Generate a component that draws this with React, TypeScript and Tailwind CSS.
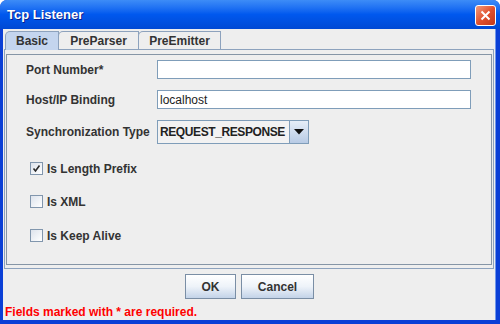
import { useState } from 'react';

const font = { fontFamily: '"Liberation Sans", Arial, sans-serif' };

function Tab({ label, active, width }: { label: string; active?: boolean; width: string }) {
  return (
    <div
      className={`flex h-[18px] items-center justify-center rounded-tl-[5px] border border-b-0 border-[#8da2bd] text-[12px] font-bold text-[#333333] ${width} ${
        active ? 'relative z-10 -mb-[1px] h-[19px] bg-[#c4d5ee]' : '-ml-[1px] bg-[#eeeeee]'
      }`}
    >
      {label}
    </div>
  );
}

function Field({ value }: { value?: string }) {
  return (
    <div className="flex h-[19px] w-[314px] items-center border border-[#7f9db9] bg-white pl-[2px] text-[12px] text-[#222222]">
      {value}
    </div>
  );
}

function Check({ label, checked }: { label: string; checked?: boolean }) {
  return (
    <div className="flex h-[13px] items-center pl-[4px]">
      <div className="flex h-[13px] w-[13px] items-center justify-center border border-[#8196ad] bg-gradient-to-br from-[#dde3ec] to-white">
        {checked && (
          <svg width="9" height="9" viewBox="0 0 9 9" aria-hidden>
            <path d="M1.5 4.5 L3.5 7 L7.5 1.5" fill="none" stroke="#2a2a2a" strokeWidth="1.6" />
          </svg>
        )}
      </div>
      <span className="ml-[4px] text-[12px] font-bold text-[#333333]">{label}</span>
    </div>
  );
}

function XpButton({ label, width }: { label: string; width: string }) {
  return (
    <button
      className={`flex h-[25px] items-center justify-center border border-[#7a8ea5] bg-gradient-to-b from-white via-[#eef3f9] to-[#c3d3e8] text-[12px] font-bold text-[#333333] ${width}`}
    >
      {label}
    </button>
  );
}

export default function App() {
  const [tab] = useState('Basic');

  return (
    <div className="h-[324px] w-[500px] overflow-hidden bg-white" style={font}>
      <div className="flex h-full w-full flex-col overflow-hidden rounded-t-[7px] bg-[#0a3fd6]">
        {/* title bar */}
        <div className="flex h-[29px] shrink-0 items-center justify-between bg-gradient-to-b from-[#3d8cf7] via-[#0058ee] to-[#0049d4] pl-[7px] pr-[4px]">
          <span className="text-[13px] font-bold text-white [text-shadow:1px_1px_0_#0a1e8c]">Tcp Listener</span>
          <div className="mt-[1px] flex h-[21px] w-[21px] items-center justify-center rounded-[3px] border border-white bg-gradient-to-br from-[#f09a7d] via-[#e1512e] to-[#c2381a]">
            <svg width="11" height="11" viewBox="0 0 11 11" aria-hidden>
              <path d="M1.5 1.5 L9.5 9.5 M9.5 1.5 L1.5 9.5" stroke="white" strokeWidth="2" />
            </svg>
          </div>
        </div>

        {/* body */}
        <div className="ml-[3px] mr-[4px] flex h-[291px] flex-col border-r border-[#6f97ea] bg-[#eeeeee] pr-[1px]">
          <div className="flex items-end pl-[2px] pt-[2px]">
            <Tab label="Basic" active={tab === 'Basic'} width="w-[54px]" />
            <Tab label="PreParser" width="w-[81px]" />
            <Tab label="PreEmitter" width="w-[83px]" />
          </div>

          <div className="ml-[1px] h-[220px] border border-[#8da2bd] bg-[#eeeeee] px-[1px] pb-[3px] pt-[4px]">
            <div className="flex h-full flex-col border border-[#8595a6] pl-[19px] pt-[5px]">
              <div className="flex items-center">
                <span className="w-[131px] text-[12px] font-bold text-[#333333]">Port Number*</span>
                <Field />
              </div>
              <div className="mt-[11px] flex items-center">
                <span className="w-[131px] text-[12px] font-bold text-[#333333]">Host/IP Binding</span>
                <Field value="localhost" />
              </div>
              <div className="mt-[11px] flex items-center">
                <span className="w-[131px] text-[12px] font-bold text-[#333333]">Synchronization Type</span>
                <div className="flex h-[24px] w-[152px] border border-[#7f9db9] bg-[#f2f2f2]">
                  <div className="flex flex-1 items-center pl-[2px] text-[12px] font-bold tracking-[-0.4px] text-[#222222]">REQUEST_RESPONSE</div>
                  <div className="flex w-[19px] items-center justify-center border-l border-[#7f9db9] bg-gradient-to-b from-[#e6eef8] to-[#b8cbe5]">
                    <svg width="10" height="6" viewBox="0 0 10 6" aria-hidden>
                      <path d="M0 0 H10 L5 5.5 Z" fill="#111111" />
                    </svg>
                  </div>
                </div>
              </div>
              <div className="mt-[18px]">
                <Check label="Is Length Prefix" checked />
              </div>
              <div className="mt-[20px]">
                <Check label="Is XML" />
              </div>
              <div className="mt-[21px]">
                <Check label="Is Keep Alive" />
              </div>
            </div>
          </div>

          <div className="mt-[5px] flex justify-center gap-[5px] pl-[2px]">
            <XpButton label="OK" width="w-[51px]" />
            <XpButton label="Cancel" width="w-[73px]" />
          </div>

          <div className="mt-[6px] h-[14px] pl-[2px] text-[12px] font-bold leading-[14px] text-[#ff0000]">
            Fields marked with * are required.
          </div>
        </div>
        <div className="h-[4px]" />
      </div>
    </div>
  );
}
